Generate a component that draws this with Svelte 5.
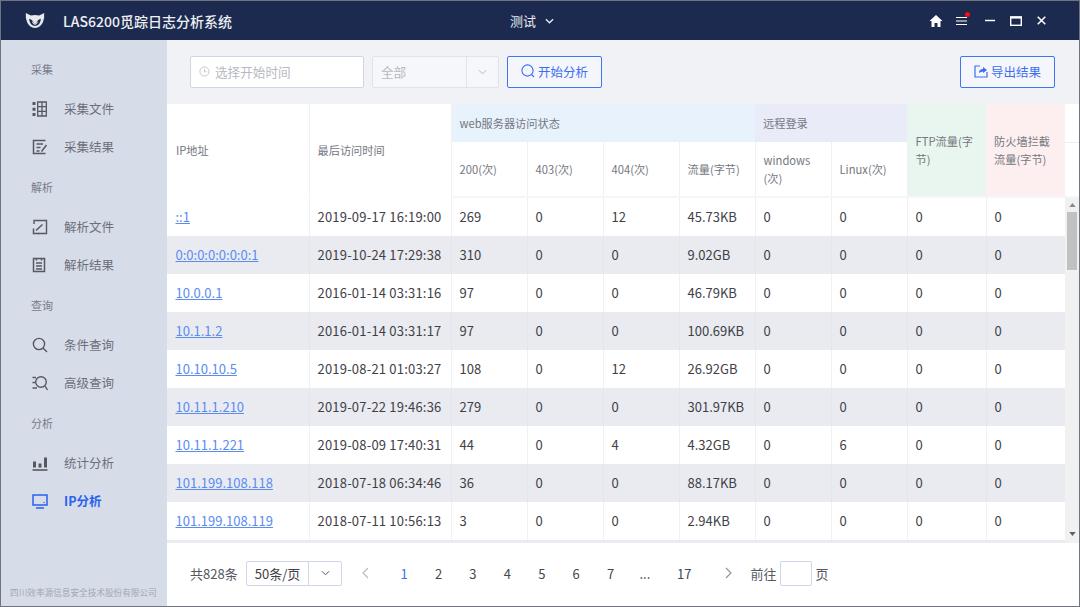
<script lang="ts">
  const groups = [
    { title: '采集', items: [{ name: '采集文件', icon: 'files' }, { name: '采集结果', icon: 'result' }] },
    { title: '解析', items: [{ name: '解析文件', icon: 'parse' }, { name: '解析结果', icon: 'list' }] },
    { title: '查询', items: [{ name: '条件查询', icon: 'search' }, { name: '高级查询', icon: 'advanced' }] },
    { title: '分析', items: [{ name: '统计分析', icon: 'chart' }, { name: 'IP分析', icon: 'monitor', active: true }] }
  ];

  const rows = [
    ['::1', '2019-09-17 16:19:00', '269', '0', '12', '45.73KB', '0', '0', '0', '0'],
    ['0:0:0:0:0:0:0:1', '2019-10-24 17:29:38', '310', '0', '0', '9.02GB', '0', '0', '0', '0'],
    ['10.0.0.1', '2016-01-14 03:31:16', '97', '0', '0', '46.79KB', '0', '0', '0', '0'],
    ['10.1.1.2', '2016-01-14 03:31:17', '97', '0', '0', '100.69KB', '0', '0', '0', '0'],
    ['10.10.10.5', '2019-08-21 01:03:27', '108', '0', '12', '26.92GB', '0', '0', '0', '0'],
    ['10.11.1.210', '2019-07-22 19:46:36', '279', '0', '0', '301.97KB', '0', '0', '0', '0'],
    ['10.11.1.221', '2019-08-09 17:40:31', '44', '0', '4', '4.32GB', '0', '6', '0', '0'],
    ['101.199.108.118', '2018-07-18 06:34:46', '36', '0', '0', '88.17KB', '0', '0', '0', '0'],
    ['101.199.108.119', '2018-07-11 10:56:13', '3', '0', '0', '2.94KB', '0', '0', '0', '0']
  ];

  const pages = ['1', '2', '3', '4', '5', '6', '7', '...', '17'];
</script>

<div class="window">
  <header class="titlebar">
    <div class="brand">
      <svg class="logo" viewBox="0 0 24 20" width="20" height="17">
        <path d="M1 1 L7 4 Q12 2.6 17 4 L23 1 Q23.6 8 21.5 12 Q19 18 12 19 Q5 18 2.5 12 Q.4 8 1 1Z" fill="#e8e9ec" />
        <path d="M12 17 Q5 15 5 8 Q11 10 12 17Z M12 17 Q19 15 19 8 Q13 10 12 17Z" fill="#1b2a4e" />
        <path d="M12 16 Q8 13 8.2 10.5 Q11 12 12 16Z M12 16 Q16 13 15.8 10.5 Q13 12 12 16Z" fill="#e8e9ec" />
      </svg>
      <span class="app-name">LAS6200觅踪日志分析系统</span>
    </div>
    <div class="project">
      <span>测试</span>
      <svg viewBox="0 0 10 6" width="9" height="6"><path d="M1 1 L5 5 L9 1" fill="none" stroke="#e8eaf0" stroke-width="1.5" /></svg>
    </div>
    <div class="win-tools">
      <svg class="t-home" viewBox="0 0 14 14" width="14" height="14"><path d="M7 1 L0.5 7 H2.5 V13 H5.5 V9 H8.5 V13 H11.5 V7 H13.5Z" fill="#fff" /></svg>
      <span class="menu-btn">
        <svg viewBox="0 0 12 10" width="11" height="10"><path d="M0 1.2 H12 M0 5 H12 M0 8.8 H12" stroke="#fff" stroke-width="1.2" /></svg>
        <i class="dot"></i>
      </span>
      <svg class="t-min" viewBox="0 0 12 12" width="11" height="11"><path d="M0 6 H11" stroke="#fff" stroke-width="1.6" /></svg>
      <svg class="t-max" viewBox="0 0 12 10" width="12" height="10"><rect x=".7" y=".9" width="10.6" height="8.4" fill="none" stroke="#fff" stroke-width="1.4" /><path d="M.7 1.6 H11.3" stroke="#fff" stroke-width="2" /></svg>
      <svg class="t-close" viewBox="0 0 10 10" width="9" height="9"><path d="M.8 .8 L9.2 9.2 M9.2 .8 L.8 9.2" stroke="#fff" stroke-width="1.7" /></svg>
    </div>
  </header>

  <div class="body">
    <aside class="sidebar">
      <nav>
        {#each groups as group}
          <div class="group-title">{group.title}</div>
          {#each group.items as item}
            <div class="nav-item" class:active={item.active}>
              <svg class="nav-icon" viewBox="0 0 16 16" width="16" height="16" fill="none" stroke="currentColor" stroke-width="1.4">
                {#if item.icon === 'files'}
                  <path d="M5.7 1 H14.3 V15 H5.7Z M10 1 V15 M5.7 5.7 H14.3 M5.7 10.3 H14.3" stroke-width="1.3" />
                  <path d="M.5 1 H3.5 V4 H.5Z M.5 6.7 H3.5 V9.7 H.5Z M.5 12 H3.5 V15 H.5Z" fill="currentColor" stroke="none" />
                {:else if item.icon === 'result'}
                  <path d="M13.5 1.5 H1.5 V14.5 H13.5 M4.5 5 H11 M4.5 8.5 H8.5 M4.5 12 H7.5" stroke-width="1.5" />
                  <path d="M14.5 6 L9.5 12.5" stroke-width="1.5" />
                {:else if item.icon === 'parse'}
                  <path d="M2 5 V1.5 H14.5 V14.5 H6" stroke-width="1.4" />
                  <path d="M10.5 5.5 L4 11.5 M1.5 9.5 V14.5 H7" stroke-width="1.5" />
                {:else if item.icon === 'list'}
                  <path d="M1.5 1.5 H12.5 V14.5 H1.5Z M4.5 1 V3.5 M9.5 1 V3.5 M4 6 H10 M4 9 H10 M4 12 H10" stroke-width="1.5" />
                {:else if item.icon === 'search'}
                  <circle cx="7" cy="7" r="5.6" /><path d="M11 11 L15 15" />
                {:else if item.icon === 'advanced'}
                  <circle cx="9" cy="7" r="5.3" /><path d="M13 11 L15.5 15 M.5 2.5 H4 M.5 7.5 H3 M.5 13 H5" />
                {:else if item.icon === 'chart'}
                  <path d="M0.5 15 H15.5" stroke-width="1.6" />
                  <path d="M2.5 6.5 V12.5 M8 8.5 V12.5 M13.5 2.5 V12.5" stroke-width="3" />
                {:else}
                  <path d="M1 2 H15 V12 H1Z M4 15 H12" stroke-width="1.5" />
                  <circle cx="12" cy="9.5" r=".7" fill="currentColor" stroke="none" />
                {/if}
              </svg>
              <span class="nav-text">{item.name}</span>
            </div>
          {/each}
        {/each}
      </nav>
      <div class="company">四川效率源信息安全技术股份有限公司</div>
    </aside>

    <main class="content">
      <div class="toolbar">
        <div class="date-input">
          <svg viewBox="0 0 12 12" width="11" height="11" fill="none" stroke="#bfc3cc"><circle cx="6" cy="6" r="5" /><path d="M6 3 V6.3 H8.3" /></svg>
          <span>选择开始时间</span>
        </div>
        <div class="select-off">
          <span class="select-text">全部</span>
          <span class="select-arrow"><svg viewBox="0 0 10 6" width="9" height="6"><path d="M1 1 L5 5 L9 1" fill="none" stroke="#b4b8c2" stroke-width="1.1" /></svg></span>
        </div>
        <button class="btn-outline">
          <svg viewBox="0 0 14 14" width="14" height="14" fill="none" stroke="#3a6ff0" stroke-width="1.1"><circle cx="6.5" cy="6.5" r="5.6" /><path d="M10.5 10.5 L13 13" /></svg>
          开始分析
        </button>
        <button class="btn-outline export">
          <svg viewBox="0 0 14 14" width="14" height="14" fill="none" stroke="#3a6ff0" stroke-width="1.2"><path d="M6 2 H1 V13 H13 V8" /><path d="M5 9 Q5 5 9 5 V3 L13 6 L9 9 V7.5 Q7 7.5 5 9Z" fill="#3a6ff0" stroke="none" /></svg>
          导出结果
        </button>
      </div>

      <div class="table-area">
        <table class="head">
          <colgroup>
            <col class="c-ip" /><col class="c-time" /><col class="c-n" /><col class="c-n" /><col class="c-n" /><col class="c-n" /><col class="c-n" /><col class="c-n" /><col class="c-ftp" /><col class="c-fw" /><col class="c-gut" />
          </colgroup>
          <thead>
            <tr class="h1">
              <th rowspan="2" class="first">IP地址</th>
              <th rowspan="2">最后访问时间</th>
              <th colspan="4" class="blue">web服务器访问状态</th>
              <th colspan="2" class="violet">远程登录</th>
              <th rowspan="2" class="green">FTP流量(字节)</th>
              <th rowspan="2" class="pink">防火墙拦截流量(字节)</th>
              <th class="gut"></th>
            </tr>
            <tr class="h2">
              <th>200(次)</th>
              <th>403(次)</th>
              <th>404(次)</th>
              <th>流量(字节)</th>
              <th>windows<br />(次)</th>
              <th>Linux(次)</th>
              <th class="gut"></th>
            </tr>
          </thead>
        </table>

        <div class="rows-wrap">
          <table class="rows">
            <colgroup>
              <col class="c-ip" /><col class="c-time" /><col class="c-n" /><col class="c-n" /><col class="c-n" /><col class="c-n" /><col class="c-n" /><col class="c-n" /><col class="c-ftp" /><col class="c-fw" />
            </colgroup>
            <tbody>
              {#each rows as row, i}
                <tr class:odd={i % 2 === 1}>
                  {#each row as cell, j}
                    <td class:first={j === 0} class:time={j === 1}>
                      {#if j === 0}<span class="ip">{cell}</span>{:else}{cell}{/if}
                    </td>
                  {/each}
                </tr>
              {/each}
            </tbody>
          </table>
          <div class="scrollbar">
            <svg viewBox="0 0 8 5" width="7" height="4"><path d="M4 0 L8 5 H0Z" fill="#8a8a8a" /></svg>
            <div class="thumb"></div>
            <div class="track"></div>
            <svg viewBox="0 0 8 5" width="7" height="4"><path d="M4 5 L8 0 H0Z" fill="#606060" /></svg>
          </div>
        </div>
      </div>

      <div class="pager">
        <span class="total">共828条</span>
        <div class="size-select">
          <span class="size-text">50条/页</span>
          <span class="size-arrow"><svg viewBox="0 0 10 6" width="9" height="6"><path d="M1 1 L5 5 L9 1" fill="none" stroke="#555" stroke-width="1.1" /></svg></span>
        </div>
        <svg class="chev prev" viewBox="0 0 8 12" width="8" height="12"><path d="M7 1 L2 6 L7 11" fill="none" stroke="#b5b9c2" stroke-width="1.1" /></svg>
        <div class="pages">
          {#each pages as p, i}
            <span class="page" class:current={i === 0} class:last={p === '17'}>{p}</span>
          {/each}
        </div>
        <svg class="chev next" viewBox="0 0 8 12" width="8" height="12"><path d="M1 1 L6 6 L1 11" fill="none" stroke="#8d919b" stroke-width="1.1" /></svg>
        <span class="goto">前往</span>
        <span class="goto-input"></span>
        <span class="goto-unit">页</span>
      </div>
    </main>
  </div>
</div>

<style>
  :global(body) {
    margin: 0;
    background: #fff;
  }

  .window {
    box-sizing: border-box;
    width: 1080px;
    height: 607px;
    display: flex;
    flex-direction: column;
    overflow: hidden;
    border: 1px solid #70747f;
    font-family: "Noto Sans CJK SC", "Noto Sans", sans-serif;
    font-size: 13px;
    color: #4a4d55;
  }

  .titlebar {
    flex: none;
    height: 39px;
    display: flex;
    align-items: center;
    background: #1b2a4e;
    color: #fff;
  }
  .brand {
    width: 480px;
    display: flex;
    align-items: center;
  }
  .logo {
    margin-left: 24px;
  }
  .app-name {
    margin-left: 18px;
    font-size: 14px;
    font-weight: 500;
    color: #eef0f4;
  }
  .project {
    width: 60px;
    margin-left: 29px;
    display: flex;
    align-items: center;
    gap: 9px;
    font-size: 13px;
    color: #e8eaf0;
  }
  .win-tools {
    margin-left: auto;
    margin-right: 33px;
    display: flex;
    align-items: center;
    gap: 13px;
  }
  .t-min {
    margin-left: 5px;
  }
  .t-max {
    margin-left: 1px;
  }
  .t-close {
    margin-left: 2px;
  }
  .menu-btn {
    position: relative;
    display: flex;
  }
  .dot {
    position: absolute;
    top: -4px;
    right: -3px;
    width: 5px;
    height: 5px;
    border-radius: 50%;
    background: #f01010;
  }

  .body {
    flex: 1;
    min-height: 0;
    display: flex;
  }

  .sidebar {
    flex: none;
    width: 166px;
    display: flex;
    flex-direction: column;
    justify-content: space-between;
    background: #d7dce9;
  }
  nav {
    padding-top: 8px;
  }
  .group-title {
    height: 42px;
    line-height: 42px;
    padding-left: 30px;
    font-size: 11px;
    color: #777b86;
  }
  .nav-item {
    height: 38px;
    display: flex;
    align-items: center;
    padding-left: 31px;
    gap: 16px;
    font-size: 12.5px;
    color: #6b6f79;
  }
  .nav-text {
    margin-top: -1px;
  }
  .nav-icon {
    flex: none;
    color: #55585f;
  }
  .nav-item.active,
  .nav-item.active .nav-icon {
    color: #2a62ee;
    font-weight: 700;
  }
  .company {
    padding: 0 0 7px 9px;
    font-size: 8.65px;
    line-height: 14px;
    white-space: nowrap;
    color: #a1a6b5;
  }

  .content {
    flex: 1;
    min-width: 0;
    display: flex;
    flex-direction: column;
  }

  .toolbar {
    flex: none;
    height: 64px;
    box-sizing: border-box;
    padding: 16px 24px 0 23px;
    display: flex;
    align-items: flex-start;
    background: #f0f2f5;
  }
  .date-input {
    box-sizing: border-box;
    width: 174px;
    height: 32px;
    display: flex;
    align-items: center;
    gap: 5px;
    padding: 0 0 2px 8px;
    background: #fff;
    border: 1px solid #cfd6e8;
    border-radius: 2px;
    font-size: 12.6px;
    color: #b6b9c2;
  }
  .select-off {
    box-sizing: border-box;
    width: 127px;
    height: 32px;
    margin-left: 8px;
    display: flex;
    background: #f6f7fa;
    border: 1px solid #dfe3ee;
    border-radius: 2px;
    font-size: 12.6px;
    color: #b6b9c2;
  }
  .select-text {
    width: 93px;
    padding-left: 8px;
    line-height: 29px;
    box-sizing: border-box;
  }
  .select-arrow {
    flex: 1;
    display: flex;
    align-items: center;
    justify-content: center;
    border-left: 1px solid #dfe3ee;
  }
  .btn-outline {
    box-sizing: border-box;
    width: 95px;
    height: 32px;
    margin-left: 8px;
    display: flex;
    align-items: center;
    justify-content: center;
    gap: 3px;
    padding: 0 0 2px;
    background: #f4f6fc;
    border: 1px solid #3f74f2;
    border-radius: 2px;
    font-family: inherit;
    font-size: 12.5px;
    color: #3a6ff0;
  }
  .btn-outline.export {
    margin-left: auto;
  }

  .table-area {
    flex: none;
    background: #fff;
  }
  table {
    table-layout: fixed;
    border-collapse: collapse;
    border-spacing: 0;
  }
  .head {
    width: 912px;
  }
  .rows {
    width: 898px;
    align-self: flex-start;
  }
  .c-ip {
    width: 142px;
  }
  .c-time {
    width: 142px;
  }
  .c-n {
    width: 76px;
  }
  .c-ftp {
    width: 79px;
  }
  .c-fw {
    width: 79px;
  }
  .c-gut {
    width: 14px;
  }

  th {
    box-sizing: border-box;
    padding: 0 8px;
    text-align: left;
    font-weight: 400;
    font-size: 11.2px;
    line-height: 18.5px;
    color: #74777f;
    border-right: 1px solid #eff1f5;
  }
  th.first {
    padding-left: 9px;
  }
  td.first {
    padding-left: 8.5px;
  }
  .h1 th {
    height: 38px;
  }
  .h2 th {
    height: 55px;
    border-bottom: 2px solid #f5f6f9;
  }
  th.blue {
    background: #e8f2fc;
    border-right: 0;
  }
  th.violet {
    background: #e9ebf8;
    border-right: 0;
  }
  th.green {
    background: #e9f5ef;
    border-right: 0;
    border-bottom: 2px solid #f5f6f9;
  }
  th.pink {
    background: #fdeff0;
    border-right: 0;
    border-bottom: 2px solid #f5f6f9;
  }
  th.gut {
    padding: 0;
    border-right: 0;
    background: #fff;
  }
  .h1 th.gut {
    border-bottom: 1px solid #eceef3;
  }

  .rows-wrap {
    height: 345px;
    display: flex;
    overflow: hidden;
    background: #e9ebf0;
  }
  td {
    box-sizing: border-box;
    height: 38px;
    padding: 0 8px;
    font-size: 13px;
    line-height: 18px;
    white-space: nowrap;
    color: #3f4147;
    background: #fff;
    border-right: 1px solid #eff1f5;
  }
  td.time {
    letter-spacing: .2px;
  }
  td:last-child {
    border-right: 0;
  }
  tr.odd td {
    background: #e9ebf0;
    border-right-color: #e4e6ec;
  }
  .ip {
    color: #5b8cf0;
    text-decoration: underline;
  }

  .scrollbar {
    flex: none;
    width: 14px;
    display: flex;
    flex-direction: column;
    align-items: center;
    background: #f1f1f1;
    padding: 5px 0 7px;
    box-sizing: border-box;
  }
  .thumb {
    width: 10px;
    height: 58px;
    margin-top: 5px;
    background: #c1c1c1;
  }
  .track {
    flex: 1;
  }

  .pager {
    flex: 1;
    display: flex;
    align-items: center;
    padding: 0 0 3px 23px;
    background: #fff;
    color: #55585f;
  }
  .total {
    width: 56px;
  }
  .size-select {
    box-sizing: border-box;
    width: 96px;
    height: 25px;
    display: flex;
    border: 1px solid #cfd6e8;
    border-radius: 2px;
    color: #3f4147;
  }
  .size-text {
    width: 61px;
    text-align: center;
    line-height: 23px;
    border-right: 1px solid #cfd6e8;
  }
  .size-arrow {
    flex: 1;
    display: flex;
    align-items: center;
    justify-content: center;
  }
  .chev.prev {
    margin-left: 19px;
  }
  .pages {
    margin-left: 18px;
    display: flex;
  }
  .page {
    width: 34.4px;
    text-align: center;
    color: #44474e;
  }
  .page.current {
    color: #3a6ff0;
  }
  .page.last {
    margin-left: 5px;
  }
  .chev.next {
    margin-left: 23px;
  }
  .goto {
    margin-left: 18px;
  }
  .goto-input {
    box-sizing: border-box;
    width: 32px;
    height: 25px;
    margin-left: 3px;
    border: 1px solid #cfd6e8;
    border-radius: 2px;
  }
  .goto-unit {
    margin-left: 4px;
  }
</style>
